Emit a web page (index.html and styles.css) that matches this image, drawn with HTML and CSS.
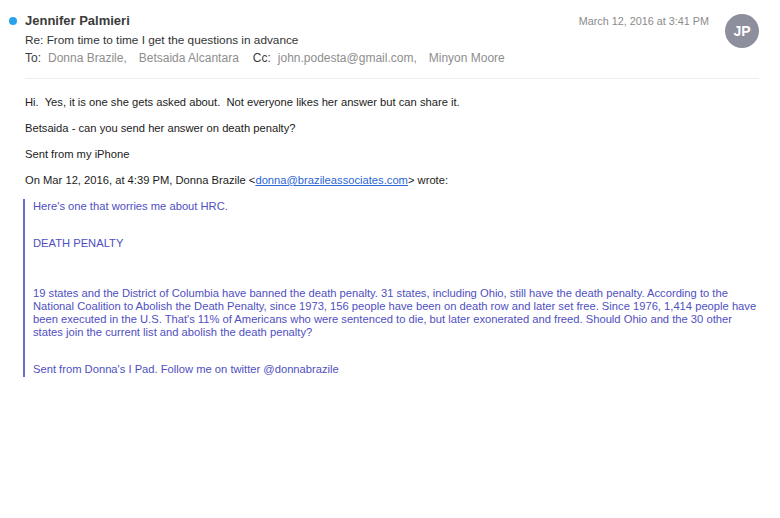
FILE: index.html
```html
<!DOCTYPE html>
<html>
<head>
<meta charset="utf-8">
<link rel="stylesheet" href="styles.css">
</head>
<body>
<div class="mail">
  <header class="head">
    <div class="head-main">
      <div class="from"><span class="dot"></span><span class="name">Jennifer Palmieri</span></div>
      <div class="subject">Re: From time to time I get the questions in advance</div>
      <div class="recips"><span class="lbl">To:</span><span class="who">Donna Brazile,</span><span class="who">Betsaida Alcantara</span><span class="lbl cc">Cc:</span><span class="who">john.podesta@gmail.com,</span><span class="who">Minyon Moore</span></div>
    </div>
    <div class="date">March 12, 2016 at 3:41 PM</div>
    <div class="avatar">JP</div>
  </header>
  <div class="rule"></div>
  <div class="body">
    <p>Hi.&nbsp; Yes, it is one she gets asked about.&nbsp; Not everyone likes her answer but can share it.</p>
    <p>Betsaida - can you send her answer on death penalty?</p>
    <p>Sent from my iPhone</p>
    <p>On Mar 12, 2016, at 4:39 PM, Donna Brazile &lt;<a href="#">donna@brazileassociates.com</a>&gt; wrote:</p>
    <blockquote class="quote">
      <p class="q1">Here's one that worries me about HRC.</p>
      <p class="q2">DEATH PENALTY</p>
      <p class="q3">19 states and the District of Columbia have banned the death penalty. 31 states, including Ohio, still have the death penalty. According to the National Coalition to Abolish the Death Penalty, since 1973, 156 people have been on death row and later set free. Since 1976, 1,414 people have been executed in the U.S. That's 11% of Americans who were sentenced to die, but later exonerated and freed. Should Ohio and the 30 other states join the current list and abolish the death penalty?</p>
      <p class="q4">Sent from Donna's I Pad. Follow me on twitter @donnabrazile</p>
    </blockquote>
  </div>
</div>
</body>
</html>
```
FILE: styles.css
```css
html, body {
  margin: 0;
  padding: 0;
  background: #ffffff;
}
body {
  font-family: "Liberation Sans", Arial, sans-serif;
  color: #1b1b1b;
}
.mail {
  padding: 12px 21px 0 9px;
}
.head {
  display: flex;
  align-items: flex-start;
}
.head-main {
  flex: 1;
}
.from {
  display: flex;
  align-items: center;
  height: 17px;
}
.dot {
  width: 8px;
  height: 8px;
  border-radius: 50%;
  background: #2ba2e8;
  margin-right: 8px;
}
.name {
  font-weight: bold;
  font-size: 13px;
  color: #3b3b3b;
}
.subject {
  margin-left: 16px;
  margin-top: 3px;
  font-size: 11.8px;
  color: #333;
  height: 16px;
  line-height: 16px;
}
.recips {
  margin-left: 16px;
  margin-top: 2px;
  font-size: 12px;
  line-height: 16px;
  color: #8e8e8e;
}
.lbl {
  color: #404040;
  margin-right: 7px;
}
.who {
  margin-right: 12px;
}
.cc {
  margin-left: 2px;
}
.date {
  font-size: 10.8px;
  color: #8a8a8a;
  margin-top: 3px;
  margin-right: 16px;
}
.avatar {
  width: 34px;
  height: 34px;
  border-radius: 50%;
  background: #8d8f9c;
  color: #fff;
  font-weight: bold;
  font-size: 14px;
  display: flex;
  align-items: center;
  justify-content: center;
  margin-top: 2px;
}
.rule {
  height: 1px;
  background: #eeeeee;
  margin: 12px 0 0 16px;
}
.body {
  padding: 16px 0 0 16px;
  font-size: 11.2px;
  line-height: 14px;
}
.body p {
  margin: 0 0 12px 0;
}
.body a {
  color: #2a65d4;
}
.quote {
  margin: 0 0 0 -2px;
  border-left: 2px solid #6c6cc4;
  padding: 1px 0 1px 8px;
  color: #4f4fbf;
  line-height: 13px;
}
.quote p {
  margin: 0;
}
.quote .q2 {
  margin-top: 24px;
}
.quote .q3 {
  margin-top: 37px;
}
.quote .q4 {
  margin-top: 24px;
}
```
